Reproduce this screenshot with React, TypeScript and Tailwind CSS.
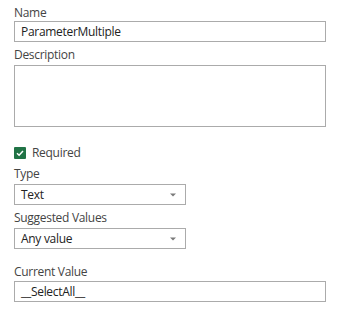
import React from 'react';

function Label({ children, className = '' }: { children: React.ReactNode; className?: string }) {
  return <div className={`h-[16px] leading-[16px] text-[#444444] ${className}`}>{children}</div>;
}

function TextBox({ value, className = '' }: { value?: string; className?: string }) {
  return (
    <div
      className={`flex h-[21px] items-center border border-[#ababab] bg-white px-[6px] leading-[16px] text-[#222222] ${className}`}
    >
      {value}
    </div>
  );
}

function Select({ value, className = '' }: { value: string; className?: string }) {
  return (
    <div
      className={`flex h-[21px] w-[172px] items-center justify-between border border-[#ababab] bg-white pl-[6px] pr-[9px] leading-[16px] text-[#222222] ${className}`}
    >
      <span>{value}</span>
      <svg width="6" height="4" viewBox="0 0 6 4" className="mt-[1px]">
        <path d="M0 0.5 H6 L3 3.5 Z" fill="#7a7a7a" />
      </svg>
    </div>
  );
}

export default function App() {
  return (
    <div
      className="h-[314px] w-[338px] bg-white px-[14px] pt-[5px] text-[12px] tracking-[-0.3px]"
      style={{ fontFamily: '"Open Sans", "Noto Sans", sans-serif' }}
    >
      <Label>Name</Label>
      <TextBox value="ParameterMultiple" className="w-[312px]" />

      <Label className="mt-[5px]">Description</Label>
      <div className="mt-[2px] h-[62px] w-[312px] border border-[#ababab] bg-white" />

      <div className="mt-[18px] flex h-[16px] items-center gap-[6px]">
        <span className="flex h-[12px] w-[12px] items-center justify-center rounded-[1px] bg-[#217346]">
          <svg width="10" height="10" viewBox="0 0 10 10">
            <path d="M2 5.2 L4.1 7.2 L8 3" fill="none" stroke="#ffffff" strokeWidth="1.5" />
          </svg>
        </span>
        <span className="leading-[16px] text-[#444444]">Required</span>
      </div>

      <Label className="mt-[5px]">Type</Label>
      <Select value="Text" className="mt-[2px]" />

      <Label className="mt-[5px]">Suggested Values</Label>
      <Select value="Any value" className="mt-[2px]" />

      <Label className="mt-[15px]">Current Value</Label>
      <TextBox value="__SelectAll__" className="mt-[1px] w-[312px]" />
    </div>
  );
}
